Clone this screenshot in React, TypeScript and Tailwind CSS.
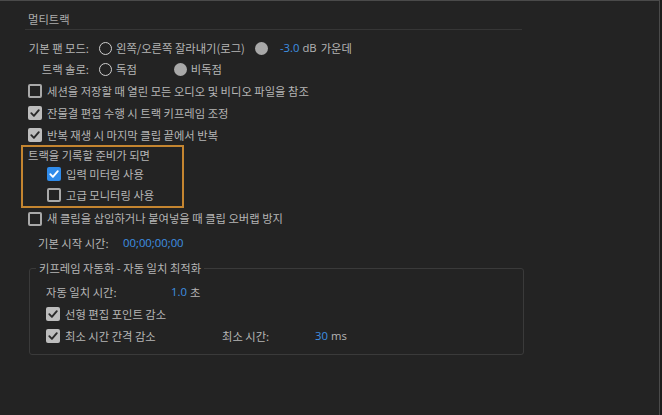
import React from 'react';

const font = { fontFamily: '"Noto Sans CJK KR", "Noto Sans", sans-serif' };
const latin = { fontFamily: '"Open Sans", "Noto Sans CJK KR", sans-serif' };

function Check({ checked = false, blue = false }: { checked?: boolean; blue?: boolean }) {
  if (!checked) {
    return <span className="w-[14px] h-[14px] shrink-0 rounded-[2px] border-2 border-[#a9a9a9]" />;
  }
  return (
    <span
      className={`w-[14px] h-[14px] shrink-0 rounded-[2px] flex items-center justify-center ${
        blue ? 'bg-[#2f8bea]' : 'bg-[#bdbdbd]'
      }`}
    >
      <svg width="12" height="12" viewBox="0 0 12 12">
        <path
          d="M2.3 6.2 L4.9 8.8 L9.8 3.2"
          fill="none"
          stroke={blue ? '#ffffff' : '#2a2a2a'}
          strokeWidth="1.9"
          strokeLinecap="round"
          strokeLinejoin="round"
        />
      </svg>
    </span>
  );
}

function Radio({ filled = false }: { filled?: boolean }) {
  return filled ? (
    <span className="w-[13px] h-[13px] shrink-0 rounded-full bg-[#a8a8a8]" />
  ) : (
    <span className="w-[13px] h-[13px] shrink-0 rounded-full border-[1.5px] border-[#cfcfcf]" />
  );
}

function CheckRow({ label, checked, blue, className = '' }: { label: string; checked?: boolean; blue?: boolean; className?: string }) {
  return (
    <div className={`flex items-center gap-[5px] ${className}`}>
      <Check checked={checked} blue={blue} />
      <span>{label}</span>
    </div>
  );
}

export default function App() {
  return (
    <div className="w-[662px] h-[415px] bg-[#1c1c1c] overflow-hidden" style={font}>
      <div className="w-[660px] h-[415px] bg-[#232323] border-t border-r border-[#4a4a4a] text-[11.3px] text-[#b5b5b5] pt-[8px] flex flex-col whitespace-nowrap">
        {/* header */}
        <div className="h-[20px] flex items-center pl-[28px] text-[#adadad]">멀티트랙</div>
        <div className="ml-[25px] w-[497px] h-px bg-[#363636]" />

        <div className="mt-[7px] h-[22px] flex items-center">
          <span className="w-[89px] text-right">기본 팬 모드:</span>
          <span className="ml-[10px] flex items-center gap-[4px]">
            <Radio />
            <span>왼쪽/오른쪽 잘라내기(로그)</span>
          </span>
          <span className="ml-[10px] flex items-center">
            <Radio filled />
            <span className="ml-[12px] text-[#3e90e2]" style={latin}>-3.0</span>
            <span className="ml-[3px]" style={latin}>dB</span>
            <span className="ml-[4px]">가운데</span>
          </span>
        </div>

        <div className="h-[21px] flex items-center">
          <span className="w-[89px] text-right">트랙 솔로:</span>
          <span className="ml-[10px] flex items-center gap-[4px]">
            <Radio />
            <span>독점</span>
          </span>
          <span className="ml-[37px] flex items-center gap-[4px]">
            <Radio filled />
            <span>비독점</span>
          </span>
        </div>

        <CheckRow className="h-[22px] pl-[28px]" label="세션을 저장할 때 열린 모든 오디오 및 비디오 파일을 참조" />
        <CheckRow className="h-[22px] pl-[28px]" checked label="잔물결 편집 수행 시 트랙 키프레임 조정" />
        <CheckRow className="h-[22px] pl-[28px]" checked label="반복 재생 시 마지막 클립 끝에서 반복" />

        {/* highlighted group */}
        <div className="ml-[21px] w-[163px] border-2 border-[#c48530] -mt-px pl-[5px]">
          <div className="h-[17px] flex items-center">트랙을 기록할 준비가 되면</div>
          <CheckRow className="h-[20px] pl-[19px]" checked blue label="입력 미터링 사용" />
          <CheckRow className="h-[22px] pl-[19px]" label="고급 모니터링 사용" />
        </div>

        <CheckRow className="h-[21px] pl-[28px]" label="새 클립을 삽입하거나 붙여넣을 때 클립 오버랩 방지" />

        <div className="mt-[3px] h-[22px] flex items-center pl-[38px]">
          <span className="w-[85px]">기본 시작 시간:</span>
          <span className="text-[#3e90e2]" style={latin}>00;00;00;00</span>
        </div>

        <fieldset className="mt-[7px] ml-[29px] w-[495px] border border-[#3a3a3a] rounded-[3px] pb-[7px]">
          <legend className="ml-[6px] px-[3px] leading-[14px]">키프레임 자동화 - 자동 일치 최적화</legend>
          <div className="pt-[6px] pl-[16px]">
            <div className="h-[22px] flex items-center">
              <span className="w-[125px]">자동 일치 시간:</span>
              <span className="text-[#3e90e2]" style={latin}>1.0</span>
              <span className="ml-[3px]">초</span>
            </div>
            <CheckRow className="h-[22px]" checked label="선형 편집 포인트 감소" />
            <div className="h-[22px] flex items-center">
              <CheckRow className="w-[176px]" checked label="최소 시간 간격 감소" />
              <span className="w-[93px]">최소 시간:</span>
              <span className="text-[#3e90e2]" style={latin}>30</span>
              <span className="ml-[3px]" style={latin}>ms</span>
            </div>
          </div>
        </fieldset>
      </div>
    </div>
  );
}
